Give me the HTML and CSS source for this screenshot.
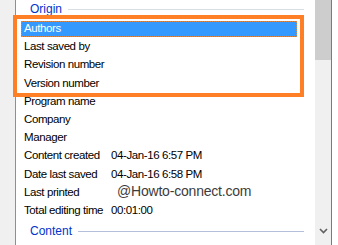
FILE: index.html
```html
<!DOCTYPE html>
<html>
<head>
<meta charset="utf-8">
<link rel="stylesheet" href="styles.css">
</head>
<body>
<div class="window">
  <div class="gutter"></div>
  <div class="list">
    <div class="group"><span class="group-title">Origin</span><span class="group-line"></span></div>
    <div class="row"><div class="cell selected"><span class="label">Authors</span><span class="value"></span></div></div>
    <div class="row"><div class="cell"><span class="label">Last saved by</span></div></div>
    <div class="row"><div class="cell"><span class="label">Revision number</span></div></div>
    <div class="row"><div class="cell"><span class="label">Version number</span></div></div>
    <div class="row"><div class="cell"><span class="label">Program name</span></div></div>
    <div class="row"><div class="cell"><span class="label">Company</span></div></div>
    <div class="row"><div class="cell"><span class="label">Manager</span></div></div>
    <div class="row"><div class="cell"><span class="label">Content created</span><span class="value">04-Jan-16 6:57 PM</span></div></div>
    <div class="row"><div class="cell"><span class="label">Date last saved</span><span class="value">04-Jan-16 6:58 PM</span></div></div>
    <div class="row"><div class="cell"><span class="label">Last printed</span></div></div>
    <div class="row"><div class="cell"><span class="label">Total editing time</span><span class="value">00:01:00</span></div></div>
    <div class="group group-content"><span class="group-title">Content</span><span class="group-line line-blue"></span></div>
    <div class="watermark">@Howto-connect.com</div>
    <div class="highlight-box"></div>
  </div>
  <div class="scrollbar">
    <div class="thumb"></div>
    <div class="track"></div>
    <div class="arrow">
      <svg width="9" height="6" viewBox="0 0 9 6"><path d="M1 1 L4.5 4.5 L8 1" fill="none" stroke="#606060" stroke-width="1.6"/></svg>
    </div>
  </div>
  <div class="edge"></div>
</div>
</body>
</html>
```

FILE: styles.css
```css
html, body {
  margin: 0;
  padding: 0;
  background: #ffffff;
  overflow: hidden;
}
.window {
  display: flex;
  width: 338px;
  height: 245px;
  font-family: "Liberation Sans", Arial, sans-serif;
  font-size: 11.5px;
  letter-spacing: -0.4px;
  color: #000;
}
.gutter {
  width: 15px;
  background: #f0f0f0;
  border-right: 1px solid #8e8f8f;
  flex: none;
}
.list {
  position: relative;
  width: 299px;
  flex: none;
  background: #fff;
}
.group {
  display: flex;
  align-items: center;
  height: 18px;
  padding-left: 14px;
  margin-right: 11px;
}
.group-title {
  color: #0033cc;
  font-size: 12px;
  letter-spacing: 0;
  line-height: 18px;
}
.group-line {
  flex: 1;
  height: 1px;
  background: #d8dfe4;
  margin-left: 6px;
}
.line-blue {
  background: #b3bfdb;
}
.group-content {
  margin-top: 4px;
}
.row {
  height: 18.2px;
  padding-top: 3px;
  box-sizing: border-box;
}
.cell {
  display: flex;
  height: 16px;
  margin-left: 5px;
  margin-right: 18px;
  line-height: 13px;
  box-sizing: border-box;
  padding-left: 2px;
  border: 1px solid transparent;
}
.cell.selected {
  background: #3399ff;
  color: #fff;
  border: 1px dotted #d98a4a;
}
.label {
  width: 87px;
  flex: none;
}
.value {
  white-space: nowrap;
}
.watermark {
  position: absolute;
  left: 101px;
  top: 183px;
  font-size: 14px;
  line-height: 16px;
  letter-spacing: -0.2px;
  color: #3c3c3c;
  white-space: nowrap;
}
.highlight-box {
  position: absolute;
  left: -3px;
  top: 15px;
  width: 283px;
  height: 74px;
  border: 4px solid #ff7f27;
}
.scrollbar {
  width: 16px;
  flex: none;
  display: flex;
  flex-direction: column;
  background: #f0f0f0;
}
.thumb {
  height: 60px;
  background: #cdcdcd;
}
.track {
  flex: 1;
}
.arrow {
  height: 17px;
  display: flex;
  justify-content: center;
  align-items: flex-start;
}
.edge {
  width: 1px;
  background: #7a7a80;
  flex: none;
}
```
